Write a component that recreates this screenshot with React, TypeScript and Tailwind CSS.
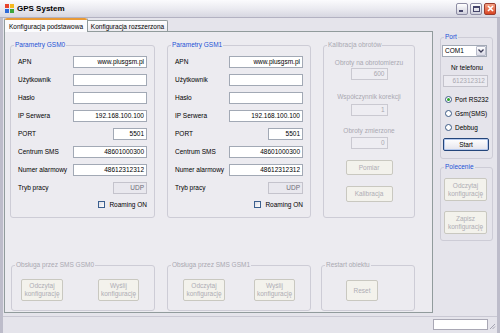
import React from "react";

const FONT = { fontFamily: '"Liberation Sans", Arial, sans-serif' };

function Group({
  title,
  enabled,
  className,
  children,
}: {
  title: string;
  enabled?: boolean;
  className: string;
  children?: React.ReactNode;
}) {
  return (
    <fieldset className={"border border-[#cdccd6] rounded-[3px] min-w-0 " + className}>
      <legend
        className={
          "ml-[3px] px-[1px] text-[6.5px] leading-[10px] " +
          (enabled ? "text-[#1c52d6]" : "text-[#a9a8b0]")
        }
      >
        {title}
      </legend>
      {children}
    </fieldset>
  );
}

function Box({ value, className, disabled }: { value?: string; className: string; disabled?: boolean }) {
  return (
    <div
      className={
        "h-[12px] border text-right pr-[2px] text-[6.5px] leading-[10px] " +
        (disabled
          ? "bg-[#e9e8ee] border-[#c4c3cc] text-[#6e6d78] "
          : "bg-white border-[#a2a9b5] text-black ") +
        className
      }
    >
      {value}
    </div>
  );
}

function DisBox({ value, className }: { value: string; className: string }) {
  return (
    <div
      className={
        "h-[12px] border border-[#cac9d1] bg-[#eeedf2] text-right pr-[2px] text-[6.5px] leading-[10px] text-[#a9a8b0] " +
        className
      }
    >
      {value}
    </div>
  );
}

function Row({ label, children }: { label: string; children: React.ReactNode }) {
  return (
    <div className="flex items-center justify-between h-[12px]">
      <span className="text-[6.5px] leading-[10px] text-black whitespace-nowrap">{label}</span>
      {children}
    </div>
  );
}

function DisButton({ lines, className }: { lines: string[]; className: string }) {
  return (
    <div
      className={
        "flex flex-col items-center justify-center border border-[#c9c8c0] rounded-[2px] bg-[#f3f2ec] text-[#aeadb4] text-[6.5px] leading-[8px] " +
        className
      }
    >
      {lines.map((l) => (
        <span key={l}>{l}</span>
      ))}
    </div>
  );
}

function GsmGroup({ boxW, portW }: { boxW: string; portW: string }) {
  return (
    <div className="pl-[7px] pr-[7px]">
      <div className="flex flex-col gap-[6px] pt-[6px]">
        <Row label="APN">
          <Box value="www.plusgsm.pl" className={boxW} />
        </Row>
        <Row label="Użytkownik">
          <Box className={boxW} />
        </Row>
        <Row label="Hasło">
          <Box className={boxW} />
        </Row>
        <Row label="IP Serwera">
          <Box value="192.168.100.100" className={boxW} />
        </Row>
        <Row label="PORT">
          <Box value="5501" className={portW} />
        </Row>
        <Row label="Centrum SMS">
          <Box value="48601000300" className={boxW} />
        </Row>
        <Row label="Numer alarmowy">
          <Box value="48612312312" className={boxW} />
        </Row>
        <Row label="Tryb pracy">
          <Box value="UDP" disabled className={portW} />
        </Row>
      </div>
      <div className="flex items-center justify-end h-[9px] mt-[6px]">
        <div className="w-[7px] h-[7px] border border-[#3b5f8f] bg-gradient-to-br from-[#dcdce4] to-white" />
        <span className="ml-[4px] text-[6.5px] leading-[9px] text-black">Roaming ON</span>
      </div>
    </div>
  );
}

function Radio({ label, checked }: { label: string; checked?: boolean }) {
  return (
    <div className="flex items-center h-[14px] pl-[3px]">
      <div className="w-[7px] h-[7px] rounded-full border border-[#3d5b86] bg-white flex items-center justify-center">
        {checked && <div className="w-[3px] h-[3px] rounded-full bg-[#2aa52a]" />}
      </div>
      <span className="ml-[3px] text-[6.5px] leading-[9px] text-black">{label}</span>
    </div>
  );
}

export default function App() {
  return (
    <div style={FONT} className="w-[500px] h-[333px] overflow-hidden bg-[#e5e4eb] flex flex-col">
      {/* Title bar */}
      <div className="h-[18px] flex items-center pl-[5px] pr-[4px] bg-gradient-to-b from-[#fbfbfd] via-[#ebebf1] to-[#d7d7e1] border-b border-[#b3b2c2]">
        <svg width="9" height="9" viewBox="0 0 9 9">
          <rect x="0" y="0" width="4" height="4" fill="#e8452c" />
          <rect x="5" y="0" width="4" height="4" fill="#f6b91e" />
          <rect x="0" y="5" width="4" height="4" fill="#2f6ad8" />
          <rect x="5" y="5" width="4" height="4" fill="#3ca63c" />
        </svg>
        <span className="ml-[3px] text-[8px] leading-[10px] font-bold text-black">GPS System</span>
        <div className="flex-1" />
        <div className="flex gap-[2px]">
          <div className="w-[12px] h-[12px] rounded-[2px] border border-[#8e8da4] bg-gradient-to-b from-white to-[#cfcfdc] flex items-end justify-center pb-[2px]">
            <div className="w-[4px] h-[2px] bg-[#45456a] mr-[2px]" />
          </div>
          <div className="w-[12px] h-[12px] rounded-[2px] border border-[#8e8da4] bg-gradient-to-b from-white to-[#cfcfdc] flex items-center justify-center">
            <div className="w-[7px] h-[6px] border border-t-2 border-[#45456a]" />
          </div>
          <div className="w-[12px] h-[12px] rounded-[2px] border border-[#9a3b2c] bg-gradient-to-b from-[#f4a083] to-[#d8421f] flex items-center justify-center">
            <svg width="7" height="7" viewBox="0 0 7 7">
              <path d="M1 1 L6 6 M6 1 L1 6" stroke="white" strokeWidth="1.6" />
            </svg>
          </div>
        </div>
      </div>

      {/* Body */}
      <div className="flex-1 flex flex-col border-x-[3px] border-[#bdbcca]">
        <div className="h-[298px] flex">
          {/* Tabs */}
          <div className="ml-[1px] w-[429px] flex flex-col">
            <div className="h-[13px] flex items-end">
              <div className="relative z-10 w-[84px] h-[14px] -mb-[1px] border-x border-[#919b9c] rounded-t-[2px] bg-[#fbfbfd] flex flex-col">
                <div className="h-[2px] bg-[#e89a37] rounded-t-[2px]" />
                <div className="flex-1 flex items-center justify-center text-[6.5px] leading-[9px] text-black whitespace-nowrap">
                  Konfiguracja podstawowa
                </div>
              </div>
              <div className="w-[80px] h-[11px] border-t border-r border-[#919b9c] rounded-tr-[2px] bg-gradient-to-b from-white to-[#ecebf0] flex items-center justify-center text-[6.5px] leading-[9px] text-black whitespace-nowrap">
                Konfiguracja rozszerzona
              </div>
            </div>
            <div className="h-[282px] border border-[#919b9c] bg-[#ecebf0] pt-[8px] pl-[5px]">
              {/* Top row */}
              <div className="flex">
                <Group title="Parametry GSM0" enabled className="w-[145px] h-[178px]">
                  <GsmGroup boxW="w-[74px]" portW="w-[34px]" />
                </Group>
                <Group title="Parametry GSM1" enabled className="ml-[12px] w-[144px] h-[178px]">
                  <GsmGroup boxW="w-[74px]" portW="w-[35px]" />
                </Group>
                <Group title="Kalibracja obrotów" className="ml-[12px] w-[92px] h-[178px]">
                  <div className="flex flex-col items-center pt-[8px] text-[#a9a8b0] text-[6.5px] leading-[10px]">
                    <span className="whitespace-nowrap">Obroty na obrotomierzu</span>
                    <DisBox value="600" className="w-[37px]" />
                    <span className="mt-[12px] whitespace-nowrap">Współczynnik korekcji</span>
                    <DisBox value="1" className="w-[37px] mt-[2px]" />
                    <span className="mt-[10px] whitespace-nowrap">Obroty zmierzone</span>
                    <DisBox value="0" className="w-[37px] mt-[1px]" />
                    <DisButton lines={["Pomiar"]} className="w-[47px] h-[15px] mt-[11px]" />
                    <DisButton lines={["Kalibracja"]} className="w-[47px] h-[16px] mt-[11px]" />
                  </div>
                </Group>
              </div>
              {/* Bottom row */}
              <div className="flex mt-[42px]">
                <Group title="Obsługa przez SMS GSM0" className="ml-[1px] w-[144px] h-[51px]">
                  <div className="flex pt-[9px]">
                    <DisButton lines={["Odczytaj", "konfigurację"]} className="ml-[9px] w-[42px] h-[22px]" />
                    <DisButton lines={["Wyślij", "konfigurację"]} className="ml-[35px] w-[41px] h-[22px]" />
                  </div>
                </Group>
                <Group title="Obsługa przez SMS GSM1" className="ml-[12px] w-[144px] h-[51px]">
                  <div className="flex pt-[9px]">
                    <DisButton lines={["Odczytaj", "konfigurację"]} className="ml-[15px] w-[42px] h-[22px]" />
                    <DisButton lines={["Wyślij", "konfigurację"]} className="ml-[29px] w-[41px] h-[22px]" />
                  </div>
                </Group>
                <Group title="Restart obiektu" className="ml-[10px] w-[94px] h-[51px]">
                  <div className="flex pt-[10px]">
                    <DisButton lines={["Reset"]} className="ml-[24px] w-[32px] h-[21px]" />
                  </div>
                </Group>
              </div>
            </div>
          </div>

          {/* Right column */}
          <div className="ml-[7px] w-[53px] flex flex-col">
            <Group title="Port" enabled className="mt-[14px] h-[127px]">
              <div className="flex flex-col pl-[1px]">
                <div className="mt-[3px] w-[45px] h-[12px] border border-[#a2a9b5] bg-white flex items-center">
                  <span className="flex-1 pl-[2px] text-[6.5px] leading-[10px] text-black">COM1</span>
                  <div className="w-[10px] h-[10px] border border-[#b9bccb] rounded-[1px] bg-gradient-to-b from-white to-[#d9dae6] flex items-center justify-center">
                    <svg width="6" height="4" viewBox="0 0 6 4">
                      <path d="M0.5 0.5 L3 3 L5.5 0.5" stroke="#3c3c58" strokeWidth="1.3" fill="none" />
                    </svg>
                  </div>
                </div>
                <span className="mt-[6px] text-center text-[6.5px] leading-[10px] text-black">Nr telefonu</span>
                <div className="mt-[2px] ml-[1px] w-[45px] h-[12px] border border-[#c4c3cc] bg-[#ecebf1] text-right pr-[2px] text-[6.5px] leading-[10px] text-[#a9a8b0]">
                  612312312
                </div>
                <div className="mt-[5px]">
                  <Radio label="Port RS232" checked />
                  <Radio label="Gsm(SMS)" />
                  <Radio label="Debbug" />
                </div>
                <div className="mt-[4px] ml-[1px] w-[46px] h-[13px] border border-[#24457a] rounded-[2px] bg-gradient-to-b from-white to-[#e4e4ec] shadow-[inset_0_0_0_1px_#b5c9ee] flex items-center justify-center text-[6.5px] leading-[9px] text-black">
                  Start
                </div>
              </div>
            </Group>
            <Group title="Polecenie" enabled className="mt-[3px] h-[79px]">
              <div className="flex flex-col pt-[6px] pl-[3px]">
                <DisButton lines={["Odczytaj", "konfigurację"]} className="w-[43px] h-[23px]" />
                <DisButton lines={["Zapisz", "konfigurację"]} className="mt-[10px] w-[43px] h-[23px]" />
              </div>
            </Group>
          </div>
        </div>

        {/* Status bar */}
        <div className="flex-1 border-t border-[#c9c8d3] flex justify-end items-start pt-[2px]">
          <div className="w-[55px] h-[11px] bg-white border border-[#a9a8b5]" />
          <div className="w-[9px] h-[11px] flex items-end justify-end pr-[1px]">
            <svg width="7" height="7" viewBox="0 0 7 7">
              <path d="M6 1 L1 6 M6 3.5 L3.5 6" stroke="#a5a4b2" strokeWidth="1" />
            </svg>
          </div>
        </div>
      </div>
    </div>
  );
}
